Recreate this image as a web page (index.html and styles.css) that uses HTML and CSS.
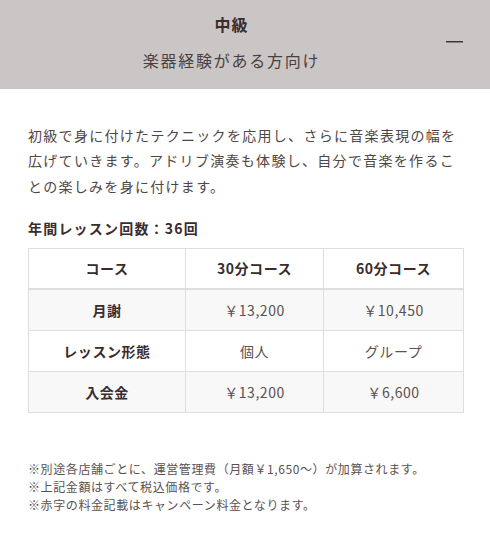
FILE: index.html
```html
<!DOCTYPE html>
<html lang="ja">
<head>
<meta charset="utf-8">
<link rel="stylesheet" href="styles.css">
</head>
<body>
<section class="acc">
  <div class="acc-head">
    <div class="acc-titles">
      <div class="acc-title">中級</div>
      <div class="acc-sub">楽器経験がある方向け</div>
    </div>
    <span class="acc-toggle" aria-hidden="true"></span>
  </div>
  <div class="acc-body">
    <p class="lead">初級で身に付けたテクニックを応用し、さらに音楽表現の幅を広げていきます。アドリブ演奏も体験し、自分で音楽を作ることの楽しみを身に付けます。</p>
    <h3 class="count">年間レッスン回数：36回</h3>
    <table class="price">
      <colgroup><col class="c1"><col class="c2"><col class="c3"></colgroup>
      <thead>
        <tr><th>コース</th><th>30分コース</th><th>60分コース</th></tr>
      </thead>
      <tbody>
        <tr class="alt"><th>月謝</th><td>￥13,200</td><td>￥10,450</td></tr>
        <tr><th>レッスン形態</th><td>個人</td><td>グループ</td></tr>
        <tr class="alt"><th>入会金</th><td>￥13,200</td><td>￥6,600</td></tr>
      </tbody>
    </table>
    <ul class="notes">
      <li>※別途各店舗ごとに、運営管理費（月額￥1,650〜）が加算されます。</li>
      <li>※上記金額はすべて税込価格です。</li>
      <li>※赤字の料金記載はキャンペーン料金となります。</li>
    </ul>
  </div>
</section>
</body>
</html>
```
FILE: styles.css
```css
html, body {
  margin: 0;
  padding: 0;
  background: #fff;
}
body {
  font-family: "Noto Sans CJK JP", "Noto Sans", sans-serif;
  color: #4f4646;
  width: 490px;
}
.acc-head {
  background: #cbc6c6;
  height: 89px;
  box-sizing: border-box;
  display: grid;
  grid-template-columns: 1fr auto 1fr;
  align-items: center;
  padding: 0 27px 0 0;
}
.acc-titles {
  grid-column: 2;
  display: flex;
  flex-direction: column;
  align-items: center;
  gap: 12px;
  padding-top: 12px;
  padding-bottom: 17px;
}
.acc-title {
  font-size: 16px;
  line-height: 24px;
  font-weight: 700;
  color: #3a2c2c;
  letter-spacing: 0.06em;
}
.acc-sub {
  font-size: 16px;
  line-height: 24px;
  color: #4a3f3f;
  letter-spacing: 0.11em;
}
.acc-toggle {
  grid-column: 3;
  justify-self: end;
  width: 17px;
  height: 1px;
  border-bottom: 1px solid #8a8080;
  background: #3f3434;
  margin-top: -6px;
}
.acc-body {
  padding: 34px 28px 40px;
}
.lead {
  margin: 0;
  font-size: 14px;
  line-height: 25.3px;
  letter-spacing: 1.3px;
  color: #4f4646;
}
.count {
  margin: 19px 0 10px;
  font-size: 14px;
  line-height: 20px;
  font-weight: 700;
  letter-spacing: 1.2px;
  color: #3a2c2c;
}
.price {
  width: 435px;
  border-collapse: collapse;
  table-layout: fixed;
  font-size: 14px;
  letter-spacing: 0.04em;
}
.price .c1 { width: 157px; }
.price .c2 { width: 138px; }
.price .c3 { width: 140px; }
.price th, .price td {
  border: 1px solid #dedede;
  text-align: center;
  padding: 0;
  height: 40px;
  line-height: 20px;
}
.price thead th {
  height: 39px;
  border-bottom: 2px solid #dedede;
  background: #fff;
}
.price th {
  font-weight: 700;
  color: #3a2c2c;
}
.price td {
  color: #5a5151;
  font-weight: 400;
}
.price tr.alt th, .price tr.alt td {
  background: #f8f8f8;
}
.notes {
  list-style: none;
  margin: 47px 0 0;
  padding: 0;
  font-size: 12px;
  line-height: 18.3px;
  letter-spacing: 0.05em;
  color: #5a5151;
}
```
